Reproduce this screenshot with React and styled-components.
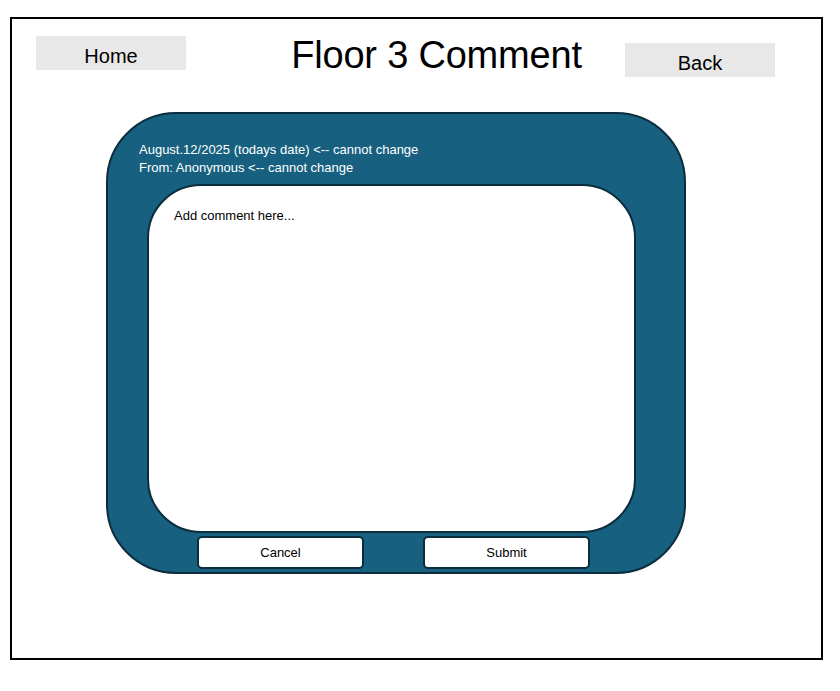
import React, { useState } from 'react';
import styled, { createGlobalStyle } from 'styled-components';

const GlobalStyle = createGlobalStyle`
  html, body {
    margin: 0;
    padding: 0;
    background: #ffffff;
    font-family: 'Liberation Sans', Arial, sans-serif;
  }
`;

const Frame = styled.div`
  box-sizing: border-box;
  margin: 17px 0 0 10px;
  width: 813px;
  height: 643px;
  border: 2px solid #000000;
  background: #ffffff;
`;

const TopBar = styled.div`
  display: flex;
  align-items: flex-start;
  padding: 17px 0 0 24px;
  height: 93px;
  box-sizing: border-box;
`;

const NavButton = styled.button`
  box-sizing: border-box;
  width: 150px;
  height: 34px;
  margin-top: ${(p) => p.$offset || 0}px;
  border: none;
  background: #e8e8e8;
  color: #000000;
  font-family: 'Liberation Sans', Arial, sans-serif;
  font-size: 20px;
  padding: 6px 0 0;
  cursor: pointer;
`;

const Title = styled.h1`
  margin: 0 42px 0 104px;
  width: 293px;
  text-align: center;
  font-family: 'Liberation Sans', Arial, sans-serif;
  font-weight: 400;
  font-size: 38px;
  line-height: 38px;
  color: #000000;
  letter-spacing: -0.2px;
`;

const Card = styled.div`
  box-sizing: border-box;
  margin-left: 94px;
  width: 580px;
  height: 462px;
  border-radius: 70px;
  background: #17607f;
  border: 2px solid #0b2d3d;
  display: flex;
  flex-direction: column;
`;

const Meta = styled.div`
  padding: 27px 0 0 31px;
  color: #ffffff;
  font-size: 13px;
  line-height: 18px;
  height: 70px;
  box-sizing: border-box;
`;

const CommentBox = styled.textarea`
  box-sizing: border-box;
  margin-left: 39px;
  width: 489px;
  height: 349px;
  border-radius: 54px;
  border: 2px solid #0b2d3d;
  background: #ffffff;
  padding: 22px 25px;
  resize: none;
  outline: none;
  font-family: 'Liberation Sans', Arial, sans-serif;
  font-size: 13px;
  color: #000000;

  &::placeholder {
    color: #000000;
  }
`;

const Actions = styled.div`
  display: flex;
  gap: 59px;
  margin: 3px 0 0 89px;
`;

const ActionButton = styled.button`
  box-sizing: border-box;
  width: 167px;
  height: 33px;
  border-radius: 5px;
  border: 2px solid #0b2d3d;
  background: #ffffff;
  font-family: 'Liberation Sans', Arial, sans-serif;
  font-size: 13px;
  color: #000000;
  cursor: pointer;
`;

export default function App() {
  const [text, setText] = useState('');

  return (
    <>
      <GlobalStyle />
      <Frame>
        <TopBar>
          <NavButton>Home</NavButton>
          <Title>Floor 3 Comment</Title>
          <NavButton $offset={7}>Back</NavButton>
        </TopBar>
        <Card>
          <Meta>
            <div>August.12/2025 (todays date) &lt;-- cannot change</div>
            <div>From: Anonymous &lt;-- cannot change</div>
          </Meta>
          <CommentBox
            placeholder="Add comment here..."
            value={text}
            onChange={(e) => setText(e.target.value)}
          />
          <Actions>
            <ActionButton onClick={() => setText('')}>Cancel</ActionButton>
            <ActionButton>Submit</ActionButton>
          </Actions>
        </Card>
      </Frame>
    </>
  );
}
